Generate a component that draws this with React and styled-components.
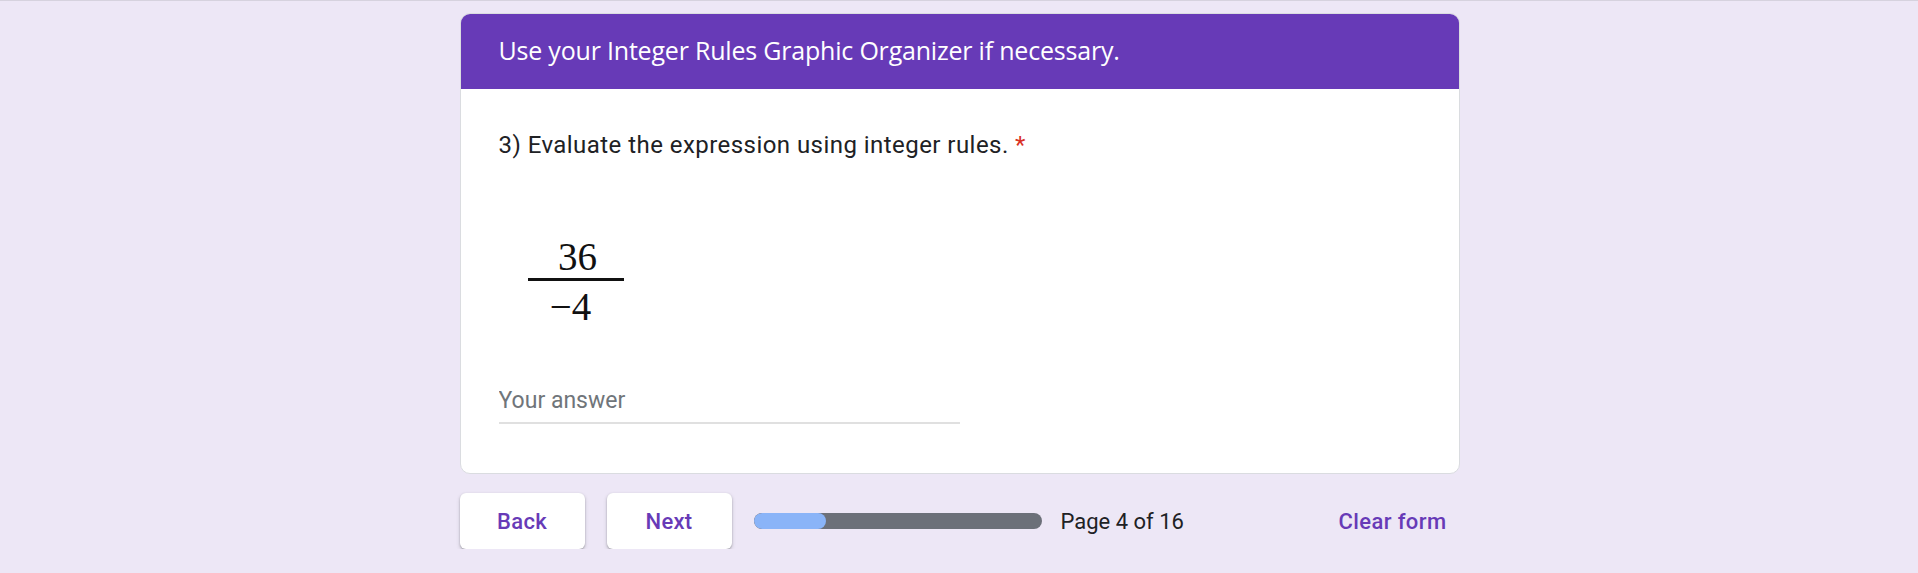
import styled, {createGlobalStyle} from "styled-components"

const GlobalStyle = createGlobalStyle`
	html, body {
		margin: 0;
		padding: 0;
		background: #ede7f6;
	}
	body {
		border-top: 1px solid #d6d2de;
		font-family: Roboto, "Liberation Sans", sans-serif;
	}
`

const App = () => {
	return (
		<>
			<GlobalStyle />
			<Page>
				<Card>
					<Header>Use your Integer Rules Graphic Organizer if necessary.</Header>
					<Body>
						<Question>
							3) Evaluate the expression using integer rules. <Star>*</Star>
						</Question>
						<Fraction>
							<Numerator>36</Numerator>
							<Denominator>−4</Denominator>
						</Fraction>
						<Answer placeholder="Your answer" />
					</Body>
				</Card>
				<Footer>
					<NavButton>Back</NavButton>
					<NavButton>Next</NavButton>
					<Progress>
						<ProgressFill style={{width: `${(4 / 16) * 100}%`}} />
					</Progress>
					<PageLabel>Page 4 of 16</PageLabel>
					<ClearButton>Clear form</ClearButton>
				</Footer>
			</Page>
		</>
	)
}

export default App

const Page = styled.main`
	width: 1000px;
	margin: 0 auto;
	padding-top: 12px;
	padding-left: 1px;
`

const Card = styled.section`
	background: #fff;
	border: 1px solid #dadce0;
	border-radius: 10px;
	overflow: hidden;
`

const Header = styled.h1`
	margin: 0;
	height: 75px;
	box-sizing: border-box;
	padding: 0 38px 4px;
	display: flex;
	align-items: center;
	background: #673ab7;
	color: #fff;
	font-family: "Open Sans", Roboto, sans-serif;
	font-size: 25px;
	font-weight: 400;
	letter-spacing: -0.2px;
`

const Body = styled.div`
	padding: 42px 38px 49px;
	display: flex;
	flex-direction: column;
`

const Question = styled.div`
	font-size: 24px;
	color: #202124;
	line-height: 28px;
	letter-spacing: 0.45px;
`

const Star = styled.span`
	color: #d93025;
`

const Fraction = styled.div`
	margin: 80px 0 0 29px;
	width: 96px;
	display: flex;
	flex-direction: column;
	align-items: center;
	font-family: "Liberation Serif", "DejaVu Serif", serif;
	font-size: 39px;
	line-height: 36px;
	color: #111;
`

const Numerator = styled.div`
	width: 100%;
	text-align: center;
	padding-left: 4px;
	box-sizing: border-box;
	padding-bottom: 3px;
	border-bottom: 3px solid #111;
`

const Denominator = styled.div`
	padding-top: 8px;
	padding-right: 10px;
`

const Answer = styled.input`
	margin-top: 62px;
	width: 461px;
	border: none;
	border-bottom: 2px solid #e0e0e0;
	padding: 0 0 8px;
	font-family: Roboto, sans-serif;
	font-size: 23px;
	color: #202124;
	outline: none;
	background: transparent;

	&::placeholder {
		color: #70757a;
	}
`

const Footer = styled.nav`
	margin-top: 19px;
	display: flex;
	align-items: center;
`

const NavButton = styled.button`
	width: 125px;
	height: 56px;
	margin-right: 22px;
	border: none;
	border-radius: 6px;
	background: #fff;
	box-shadow: 0 1px 2px rgba(60, 64, 67, 0.35), 0 2px 4px rgba(60, 64, 67, 0.18);
	color: #673ab7;
	font-family: Roboto, sans-serif;
	font-size: 22px;
	font-weight: 500;
	letter-spacing: 0.3px;
	cursor: pointer;
`

const Progress = styled.div`
	width: 288px;
	height: 16px;
	border-radius: 8px;
	background: #6c7079;
	overflow: hidden;
`

const ProgressFill = styled.div`
	height: 100%;
	border-radius: 8px;
	background: #8ab4f8;
`

const PageLabel = styled.span`
	margin-left: 19px;
	font-size: 22px;
	color: #202124;
`

const ClearButton = styled.button`
	margin-left: auto;
	margin-right: 1px;
	padding: 0 12px;
	height: 56px;
	border: none;
	background: transparent;
	color: #673ab7;
	font-family: Roboto, sans-serif;
	font-size: 22px;
	font-weight: 500;
	letter-spacing: 0.4px;
	cursor: pointer;
`
